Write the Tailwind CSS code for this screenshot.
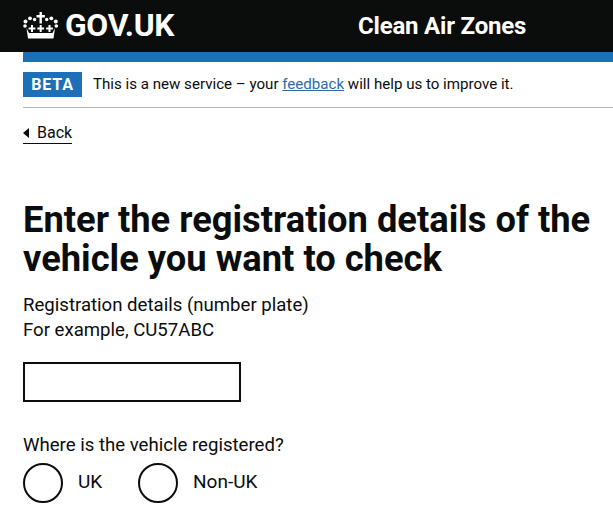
<!DOCTYPE html>
<html lang="en">
<head>
    <meta charset="UTF-8">
    <title>Clean Air Zones</title>
    <script src="https://cdn.jsdelivr.net/npm/@tailwindcss/browser@4"></script>
</head>
<body class="bg-white text-[#0b0c0c] font-['Roboto','Open_Sans',sans-serif] overflow-hidden">
    <header class="bg-[#0b0c0c] h-[52px] flex items-center pl-[23px] text-white">
        <div class="flex items-center w-[335px]">
            <svg class="w-[36px] h-[27px] mr-[6px] -mt-[1px]" viewBox="0 0 36 27" fill="white">
                <path d="M16.500 0h2.400v3h3v2.400h-3v6h-2.400v-6h-3V3h3z"/>
                <circle cx="7" cy="6.300" r="1.900"/><circle cx="11.600" cy="7.500" r="1.700"/><circle cx="23.700" cy="7.500" r="1.700"/><circle cx="28.300" cy="6.300" r="1.900"/>
                <circle cx="2.500" cy="9.500" r="2"/><circle cx="32.800" cy="9.500" r="2"/>
                <circle cx="2" cy="14" r="1.800"/><circle cx="33.300" cy="14" r="1.800"/>
                <path d="M8 13h2v2.500h2.400v2H10V20H8v-2.500H5.600v-2H8zM16.700 13h2v2.500h2.400v2h-2.400V20h-2v-2.500h-2.400v-2h2.400zM25.500 13h2v2.500h2.400v2h-2.400V20h-2v-2.500h-2.400v-2h2.400z"/>
                <path d="M3.500 16l2.500 5h23.500l2.500-5-1.500 10.500H5z"/>
            </svg>
            <span class="text-[31.800px] font-bold leading-none tracking-[-0.3px]">GOV.UK</span>
        </div>
        <span class="text-[24px] font-bold leading-none tracking-[-0.2px] -mt-[1px]">Clean Air Zones</span>
    </header>
    <div class="pl-[23px]">
        <div class="h-[10px] bg-[#1d70b8]"></div>
        <div class="flex items-center h-[46px] border-b border-[#b1b4b6]">
            <span class="bg-[#1d70b8] text-white font-bold text-[16px] tracking-[0.8px] w-[59px] h-[25px] flex items-center justify-center mr-[11px]">BETA</span>
            <p class="text-[15.100px]">This is a new service – your <a href="#" class="text-[#2b6ca8] underline">feedback</a> will help us to improve it.</p>
        </div>
        <a href="#" class="mt-[14px] inline-flex items-center border-b border-[#0b0c0c] h-[22px] w-[49px] text-[16px]">
            <span class="w-0 h-0 border-y-[5px] border-y-transparent border-r-[6px] border-r-[#0b0c0c] mr-[8px]"></span>Back
        </a>
        <h1 class="mt-[55px] text-[36.300px] font-bold leading-[39px] pr-2">Enter the registration details of the vehicle you want to check</h1>
        <p class="mt-[15px] text-[18.600px] leading-[25px]">Registration details (number plate)<br>For example, CU57ABC</p>
        <input type="text" class="mt-[19px] block w-[218px] h-[40px] border-2 border-[#0b0c0c]">
        <p class="mt-[31px] text-[18.600px] leading-[25px]">Where is the vehicle registered?</p>
        <div class="mt-[5px] flex items-center text-[19px]">
            <span class="w-[40px] h-[40px] rounded-full border-2 border-[#0b0c0c]"></span>
            <span class="ml-[15px] w-[60px]">UK</span>
            <span class="w-[40px] h-[40px] rounded-full border-2 border-[#0b0c0c]"></span>
            <span class="ml-[15px]">Non-UK</span>
        </div>
    </div>
</body>
</html>
